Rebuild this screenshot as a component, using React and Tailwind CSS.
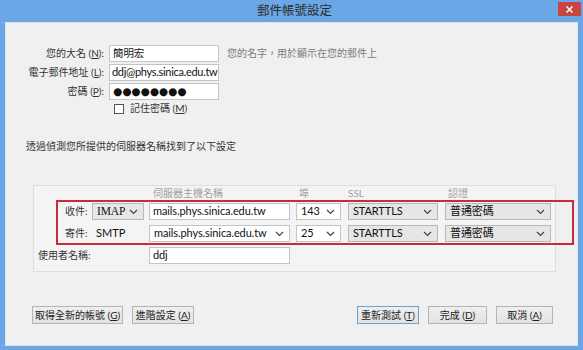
import React from 'react';

const FONT = { fontFamily: 'Lato, "Noto Sans CJK TC", sans-serif' };

const Chevron = () => (
  <svg width="9" height="6" viewBox="0 0 9 6" className="shrink-0">
    <path d="M1 1 L4.5 4.5 L8 1" fill="none" stroke="#444" strokeWidth="1.2" />
  </svg>
);

// Windows-style dropdown (grey) or editable combo (white)
const Select = ({ value, width, editable, serif }) => (
  <div
    className={`h-[17px] flex items-center justify-between pl-[4px] pr-[5px] border text-[11px] tracking-[-0.1px] text-[#111] whitespace-nowrap ${
      editable ? 'bg-white border-[#c4c4c4]' : 'bg-[#e6e6e6] border-[#b8b8b8]'
    }`}
    style={{ width }}
  >
    <span style={serif ? { fontFamily: '"Liberation Serif", serif', fontSize: 11.5 } : undefined}>{value}</span>
    <Chevron />
  </div>
);

const Input = ({ value, width, className = '' }) => (
  <div
    className={`h-[17px] flex items-center px-[3px] bg-white border border-[#c4c4c4] text-[11px] tracking-[-0.1px] text-[#111] overflow-hidden whitespace-nowrap ${className}`}
    style={{ width }}
  >
    {value}
  </div>
);

const Button = ({ children, primary }) => (
  <div
    className={`h-[18px] flex items-center justify-center border text-[10px] text-[#222] whitespace-nowrap bg-gradient-to-b from-[#efefef] to-[#e2e2e2] ${
      primary ? 'border-[#6a9fd8]' : 'border-[#b4b4b4]'
    }`}
  >
    {children}
  </div>
);

export default function App() {
  return (
    <div className="w-[583px] h-[350px] bg-[#6ba6e7] flex flex-col pt-[2px] px-[5px] pb-[4px]" style={FONT}>
      {/* title bar */}
      <div className="h-[20px] grid grid-cols-[1fr_auto_1fr] items-center">
        <div />
        <div className="text-[12.5px] text-[#2b2b2b] pl-[6px] -mt-[2px]">郵件帳號設定</div>
        <div className="flex justify-end self-start">
          <div className="w-[23px] h-[14px] bg-[#c9453f] flex items-center justify-center mr-[-3px]">
            <svg width="7" height="7" viewBox="0 0 7 7">
              <path d="M0.5 0.5 L6.5 6.5 M6.5 0.5 L0.5 6.5" stroke="#fff" strokeWidth="1.5" />
            </svg>
          </div>
        </div>
      </div>

      {/* content */}
      <div className="relative flex-1 bg-[#f0f0f0] border border-[#dbe6f2] flex flex-col text-[#333] text-[10px]">
        {/* account fields */}
        <div className="mt-[22px] flex flex-col gap-[2px]">
          <div className="h-[17px] flex items-center">
            <div className="w-[98px] text-right">您的大名 (<u>N</u>):</div>
            <Input value="簡明宏" width={110} className="ml-[5px] !text-[10.5px]" />
            <div className="ml-[8px] text-[#7a7a7a]">您的名字，用於顯示在您的郵件上</div>
          </div>
          <div className="h-[17px] flex items-center">
            <div className="w-[98px] text-right">電子郵件地址 (<u>L</u>):</div>
            <Input value="ddj@phys.sinica.edu.tw" width={110} className="ml-[5px] !px-[2px] !tracking-[-0.3px]" />
          </div>
          <div className="h-[17px] flex items-center">
            <div className="w-[98px] text-right">密碼 (<u>P</u>):</div>
            <Input
              value="●●●●●●●●"
              width={110}
              className="ml-[5px] !text-[10.5px] !tracking-[0px] [font-family:'DejaVu_Sans',sans-serif]"
            />
          </div>
          <div className="h-[13px] flex items-center pl-[108px] gap-[6px]">
            <div className="w-[10px] h-[10px] bg-white border border-[#555]" />
            <span>記住密碼 (<u>M</u>)</span>
          </div>
        </div>

        <div className="mt-[24px] h-[14px] flex items-center pl-[20px]">透過偵測您所提供的伺服器名稱找到了以下設定</div>

        {/* server settings group */}
        <div className="mt-[32px] ml-[27px] w-[523px] h-[87px] bg-[#f4f4f4] border border-[#dedede] flex flex-col">
          <div className="h-[14px] flex items-center text-[#a0a0a0]">
            <div className="w-[119px]" />
            <div className="w-[146px]">伺服器主機名稱</div>
            <div className="w-[49px]">埠</div>
            <div className="w-[100px]">SSL</div>
            <div>認證</div>
          </div>

          <div className="mt-[3px] flex items-center h-[17px]">
            <div className="w-[58px] pl-[31px]">收件:</div>
            <Select value="IMAP" width={52} serif />
            <div className="w-[5px]" />
            <Input value="mails.phys.sinica.edu.tw" width={141} />
            <div className="w-[6px]" />
            <Select value="143" width={45} editable />
            <div className="w-[7px]" />
            <Select value="STARTTLS" width={90} />
            <div className="w-[7px]" />
            <Select value="普通密碼" width={106} />
          </div>

          <div className="mt-[5px] flex items-center h-[17px]">
            <div className="w-[58px] pl-[31px]">寄件:</div>
            <div className="w-[57px] pl-[4px] text-[11px] text-[#111]">SMTP</div>
            <Select value="mails.phys.sinica.edu.tw" width={141} editable />
            <div className="w-[6px]" />
            <Select value="25" width={45} editable />
            <div className="w-[7px]" />
            <Select value="STARTTLS" width={90} />
            <div className="w-[7px]" />
            <Select value="普通密碼" width={106} />
          </div>

          <div className="mt-[5px] flex items-center h-[17px]">
            <div className="w-[115px] pl-[4px]">使用者名稱:</div>
            <Input value="ddj" width={141} />
          </div>
        </div>

        {/* annotation box */}
        <div className="absolute left-[50px] top-[177px] w-[518px] h-[45px] border-2 border-[#cc2a36]" />

        {/* buttons */}
        <div className="mt-[34px] flex items-center pl-[26px] pr-[24px]">
          <div className="flex gap-[9px]">
            <div className="w-[91px]"><Button>取得全新的帳號 (<u>G</u>)</Button></div>
            <div className="w-[62px]"><Button>進階設定 (<u>A</u>)</Button></div>
          </div>
          <div className="flex-1" />
          <div className="flex gap-[9px]">
            <div className="w-[62px]"><Button primary>重新測試 (<u>T</u>)</Button></div>
            <div className="w-[59px]"><Button>完成 (<u>D</u>)</Button></div>
            <div className="w-[57px]"><Button>取消 (<u>A</u>)</Button></div>
          </div>
        </div>
      </div>
    </div>
  );
}
